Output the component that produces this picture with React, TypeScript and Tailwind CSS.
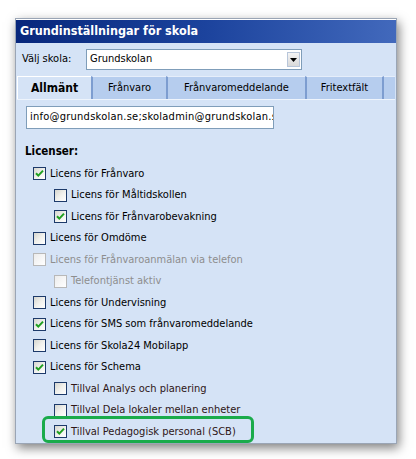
import React from "react";

type Item = { label: string; checked?: boolean; indent?: boolean; disabled?: boolean; tone?: string; highlight?: boolean };

const items: Item[] = [
  { label: "Licens för Frånvaro", checked: true },
  { label: "Licens för Måltidskollen", indent: true },
  { label: "Licens för Frånvarobevakning", indent: true, checked: true },
  { label: "Licens för Omdöme" },
  { label: "Licens för Frånvaroanmälan via telefon", disabled: true },
  { label: "Telefontjänst aktiv", indent: true, disabled: true },
  { label: "Licens för Undervisning" },
  { label: "Licens för SMS som frånvaromeddelande", checked: true },
  { label: "Licens för Skola24 Mobilapp" },
  { label: "Licens för Schema", checked: true },
  { label: "Tillval Analys och planering", indent: true, tone: "t" },
  { label: "Tillval Dela lokaler mellan enheter", indent: true, tone: "t" },
  { label: "Tillval Pedagogisk personal (SCB)", indent: true, checked: true, tone: "t", highlight: true },
];

function Box({ checked, disabled }: { checked?: boolean; disabled?: boolean }) {
  return (
    <span
      className={
        "relative inline-block w-[13px] h-[13px] shrink-0 border " +
        (disabled
          ? "border-[#b8b8b8] bg-gradient-to-br from-[#ececec] to-white"
          : "border-[#1d3a6a] bg-gradient-to-br from-[#d6d6cf] via-[#f0f0ec] to-white")
      }
    >
      {checked && (
        <svg viewBox="0 0 11 11" className="absolute left-0 top-0 w-[11px] h-[11px]">
          <path d="M2 5.2 L4.3 7.6 L9 2.6" fill="none" stroke="#21a021" strokeWidth="2" />
        </svg>
      )}
    </span>
  );
}

export default function App() {
  return (
    <div className="w-[416px] h-[459px] bg-white pt-[18px] pl-[15px]" style={{ fontFamily: '"DejaVu Sans Condensed", "Liberation Sans", sans-serif' }}>
      <div className="w-[382px] h-[426px] flex flex-col bg-[#d5e3f6] border border-[#9aa5b5] shadow-[2px_4px_10px_rgba(0,0,0,0.5)]">
        <div className="h-[24px] border-t border-white bg-gradient-to-r from-[#08277c] via-[#1c439d] to-[#4269bc] flex items-center pl-[4px] text-white font-bold text-[12.5px]">
          Grundinställningar för skola
        </div>
        <div className="flex items-center mt-[6px] pl-[6px] h-[21px] text-[11px] text-black">
          <span className="w-[64px]">Välj skola:</span>
          <div className="w-[216px] h-[21px] bg-white border border-[#7f9db9] flex items-center justify-between pl-[3px] pr-[1px]">
            <span>Grundskolan</span>
            <span className="w-[13px] h-[15px] border border-[#b8c6da] bg-gradient-to-b from-[#f4f4f4] to-[#d9d9d9] flex items-center justify-center">
              <svg viewBox="0 0 7 4" className="w-[7px] h-[4px]"><path d="M0 0 H7 L3.5 4 Z" fill="#000" /></svg>
            </span>
          </div>
        </div>
        <div className="mt-[6px] ml-[1px] mr-[1px] h-[24px] flex text-[11px] text-black border-b border-[#eef4fc]">
          <div className="w-[74px] bg-[#d5e3f6] border-t border-l border-white flex items-center justify-center font-bold text-[12px]">Allmänt</div>
          <div className="w-[75px] bg-[#b6cdee] border-t border-[#e6eefa] border-l-2 border-l-[#7d9dd0] flex items-center justify-center">Frånvaro</div>
          <div className="w-[139px] bg-[#b6cdee] border-t border-[#e6eefa] border-l-2 border-l-[#7d9dd0] flex items-center justify-center">Frånvaromeddelande</div>
          <div className="w-[79px] bg-[#b6cdee] border-t border-[#e6eefa] border-l-2 border-l-[#7d9dd0] border-r-2 border-r-[#7d9dd0] flex items-center justify-center">Fritextfält</div>
          <div className="flex-1 bg-[#b6cdee] border-t border-[#e6eefa]"></div>
        </div>
        <div className="mt-[6px] ml-[10px] w-[248px] h-[23px] bg-white border border-[#7f9db9] flex items-center pl-[3px] text-[11px] tracking-[0.25px] text-black overflow-hidden whitespace-nowrap">
          info@grundskolan.se;skoladmin@grundskolan.se
        </div>
        <div className="mt-[15px] ml-[9px] font-bold text-[11.5px] text-black h-[15px] leading-[15px]">Licenser:</div>
        <div className="mt-[4px] flex flex-col text-[11px]">
          {items.map((it, i) => (
            <div
              key={i}
              className={"relative h-[21.5px] flex items-center gap-[4px] " + (it.indent ? "pl-[38px]" : "pl-[17px]")}
            >
              {it.highlight && (
                <span className="absolute left-[26px] top-[-5px] w-[212px] h-[27px] border-[3px] border-[#1aab4b] rounded-[6px]" />
              )}
              <Box checked={it.checked} disabled={it.disabled} />
              <span className={it.disabled ? "text-[#8e8e8e]" : it.tone ? "text-[#2e1616]" : "text-black"}>{it.label}</span>
            </div>
          ))}
        </div>
      </div>
    </div>
  );
}
